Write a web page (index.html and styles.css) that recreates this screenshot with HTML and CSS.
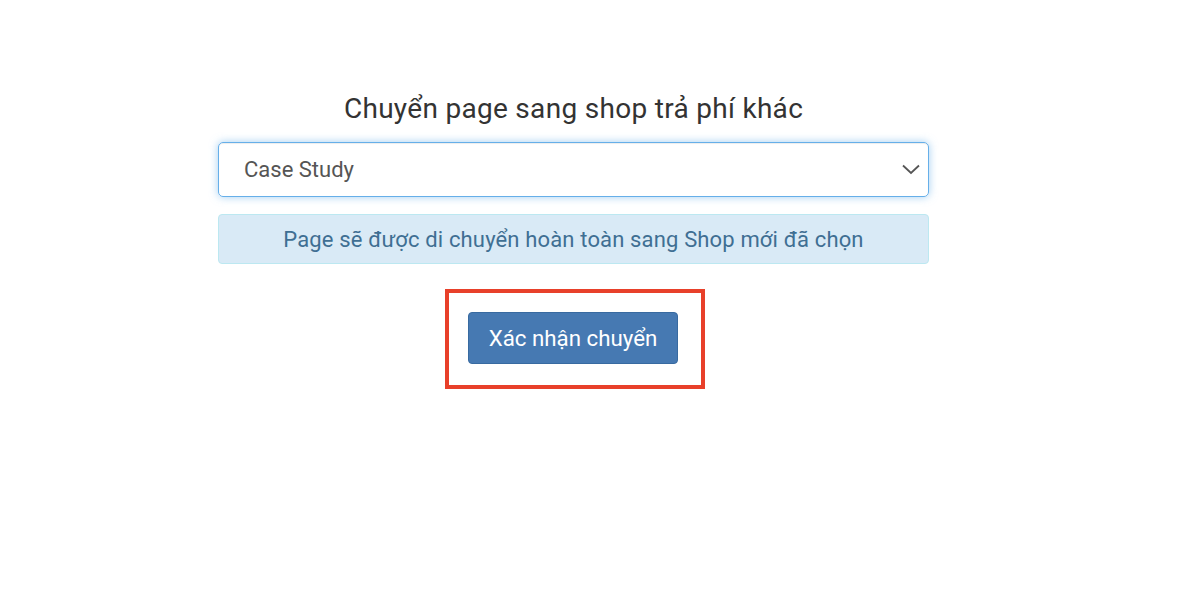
FILE: index.html
```html
<!DOCTYPE html>
<html lang="vi">
<head>
<meta charset="utf-8">
<link rel="stylesheet" href="styles.css">
</head>
<body>
<div class="wrap">
  <h2 class="title">Chuyển page sang shop trả phí khác</h2>
  <div class="select">
    <span class="select-value">Case Study</span>
    <svg class="chev" width="18" height="11" viewBox="0 0 18 11"><path d="M1 1.5 L9 9 L17 1.5" fill="none" stroke="#555" stroke-width="1.8"/></svg>
  </div>
  <div class="alert">Page sẽ được di chuyển hoàn toàn sang Shop mới đã chọn</div>
  <div class="actions">
    <div class="highlight">
      <button class="btn">Xác nhận chuyển</button>
    </div>
  </div>
</div>
</body>
</html>
```
FILE: styles.css
```css
html, body { margin: 0; padding: 0; background: #fff; }
body { font-family: Roboto, "Noto Sans", sans-serif; }
.wrap { width: 711px; margin-left: 218px; padding-top: 91px; }
.title { margin: 0; font-size: 28px; letter-spacing: 0.3px; font-weight: 400; color: #333; text-align: center; line-height: 36px; }
.select {
  margin-top: 15px; height: 55px; box-sizing: border-box;
  border: 1px solid #66afe9; border-radius: 5px;
  box-shadow: inset 0 1px 1px rgba(0,0,0,.075), 0 0 8px rgba(102,175,233,.6);
  display: flex; align-items: center; justify-content: space-between;
  padding: 0 8px 0 25px;
}
.select-value { font-size: 22px; color: #555; }
.chev { display: block; }
.alert {
  margin-top: 17px; height: 50px; box-sizing: border-box;
  background: #d9eaf6; border: 1px solid #bce8f1; border-radius: 4px;
  color: #3f6f93; font-size: 22px; letter-spacing: 0.15px; display: flex; align-items: center; justify-content: center;
}
.actions { display: flex; justify-content: center; margin-top: 25px; padding-left: 3px; }
.highlight { border: 4px solid #e8402a; padding: 19px 23px 21px 19px; }
.btn {
  display: block; width: 210px; height: 52px; border: 1px solid #386aa0; border-radius: 4px;
  background: #4679b2; color: #fff; font-family: Roboto, sans-serif; font-size: 22.3px; padding: 0;
}
```
